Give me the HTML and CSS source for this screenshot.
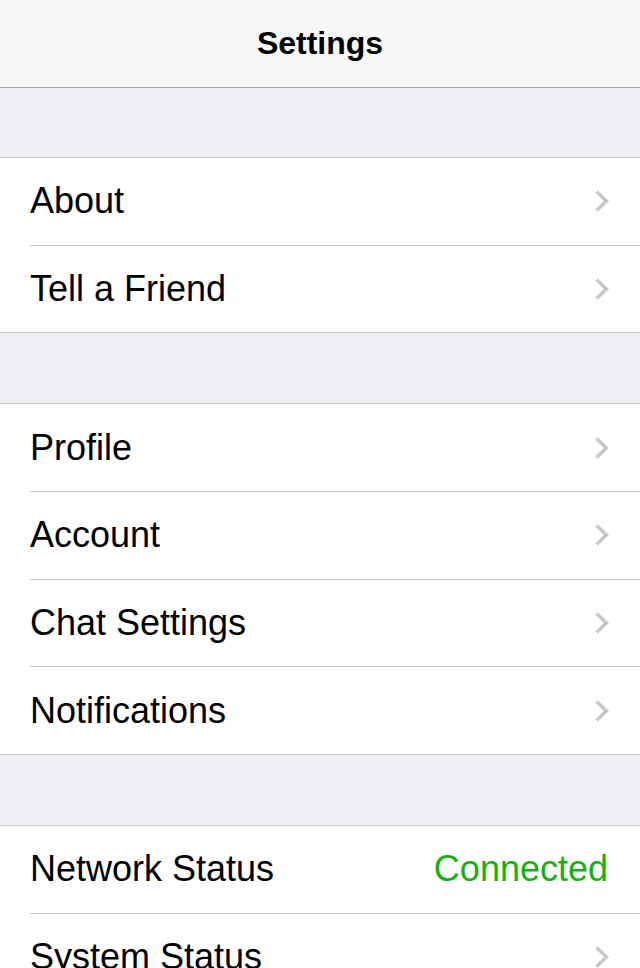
FILE: index.html
```html
<!DOCTYPE html>
<html lang="en">
<head>
  <meta charset="UTF-8">
  <title>Settings</title>
  <link rel="stylesheet" href="styles.css">
</head>
<body>
  <header class="navbar">
    <h1>Settings</h1>
  </header>

  <ul class="group first">
    <li class="row">
      <span class="label">About</span>
      <svg class="chevron" viewBox="0 0 16 24"><path d="M2.5 2.5 L12.5 12 L2.5 21.5"/></svg>
    </li>
    <li class="row">
      <span class="label">Tell a Friend</span>
      <svg class="chevron" viewBox="0 0 16 24"><path d="M2.5 2.5 L12.5 12 L2.5 21.5"/></svg>
    </li>
  </ul>

  <ul class="group">
    <li class="row">
      <span class="label">Profile</span>
      <svg class="chevron" viewBox="0 0 16 24"><path d="M2.5 2.5 L12.5 12 L2.5 21.5"/></svg>
    </li>
    <li class="row">
      <span class="label">Account</span>
      <svg class="chevron" viewBox="0 0 16 24"><path d="M2.5 2.5 L12.5 12 L2.5 21.5"/></svg>
    </li>
    <li class="row">
      <span class="label">Chat Settings</span>
      <svg class="chevron" viewBox="0 0 16 24"><path d="M2.5 2.5 L12.5 12 L2.5 21.5"/></svg>
    </li>
    <li class="row">
      <span class="label">Notifications</span>
      <svg class="chevron" viewBox="0 0 16 24"><path d="M2.5 2.5 L12.5 12 L2.5 21.5"/></svg>
    </li>
  </ul>

  <ul class="group">
    <li class="row">
      <span class="label">Network Status</span>
      <span class="value">Connected</span>
    </li>
    <li class="row">
      <span class="label">System Status</span>
      <svg class="chevron" viewBox="0 0 16 24"><path d="M2.5 2.5 L12.5 12 L2.5 21.5"/></svg>
    </li>
  </ul>
</body>
</html>
```

FILE: styles.css
```css
body {
  margin: 0;
  background: #efeff4;
  font-family: "Liberation Sans", Arial, sans-serif;
  color: #000;
}
.navbar {
  height: 87px;
  background: #f7f7f7;
  border-bottom: 1px solid #a7a7aa;
  display: flex;
  align-items: center;
  justify-content: center;
}
.navbar h1 {
  margin: 0;
  font-size: 32px;
  font-weight: bold;
}
.group {
  list-style: none;
  margin: 70px 0 0;
  padding: 0 0 0 30px;
  background: #fff;
  border-top: 1px solid #c8c7cc;
  border-bottom: 1px solid #c8c7cc;
}
.group.first {
  margin-top: 69px;
}
.row {
  height: 86.7px;
  display: flex;
  align-items: center;
  justify-content: space-between;
  padding-right: 32px;
  border-bottom: 1px solid #c8c7cc;
  font-size: 36px;
}
.row:last-child {
  border-bottom: none;
}
.value {
  color: #13b20e;
}
.chevron {
  width: 16px;
  height: 24px;
  margin-right: -2px;
  fill: none;
  stroke: #c7c7cc;
  stroke-width: 3.5;
}
```
